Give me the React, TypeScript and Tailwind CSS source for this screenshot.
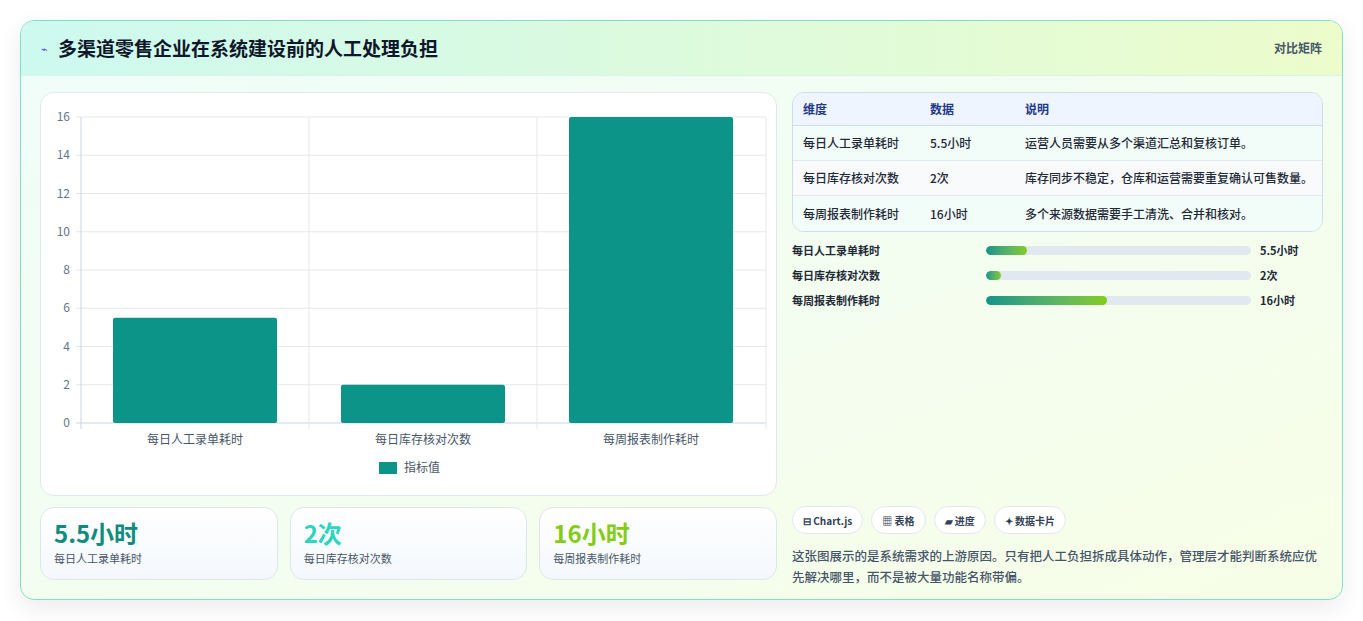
import React from "react";

const F = { fontFamily: '"Noto Sans CJK SC", "Noto Sans", sans-serif' };

function Chart() {
  const ox = 40, oy = 92;
  const y0 = 422 - oy, unit = (422 - 116) / 16;
  const ticks = [0, 2, 4, 6, 8, 10, 12, 14, 16];
  const bars = [
    { x: 112, v: 5.5, l: "每日人工录单耗时" },
    { x: 340, v: 2, l: "每日库存核对次数" },
    { x: 568, v: 16, l: "每周报表制作耗时" },
  ];
  return (
    <svg width="737" height="402" style={F}>
      {ticks.map((t) => (
        <g key={t}>
          <line x1={75 - ox} x2={765 - ox} y1={y0 - t * unit} y2={y0 - t * unit} stroke={t === 0 ? "#cbd5e1" : "#e5e7eb"} />
          <text x={69 - ox} y={y0 - t * unit + 4} textAnchor="end" fontSize="12" fill="#64748b">{t}</text>
        </g>
      ))}
      {[80, 308, 536, 765].map((x) => (
        <line key={x} x1={x - ox} x2={x - ox} y1={116 - oy} y2={y0 + 6} stroke={x === 80 ? "#cbd5e1" : "#e5e7eb"} />
      ))}
      {bars.map((b) => (
        <g key={b.x}>
          <rect x={b.x - ox} y={y0 - b.v * unit} width="164" height={b.v * unit} rx="2" fill="#0d9488" />
          <text x={b.x - ox + 82} y={443 - oy} textAnchor="middle" fontSize="12" fill="#475569">{b.l}</text>
        </g>
      ))}
      <rect x={378 - ox} y={461 - oy} width="18" height="12" fill="#0d9488" />
      <text x={403 - ox} y={471 - oy} fontSize="12" fill="#475569">指标值</text>
    </svg>
  );
}

const rows = [
  ["每日人工录单耗时", "5.5小时", "运营人员需要从多个渠道汇总和复核订单。"],
  ["每日库存核对次数", "2次", "库存同步不稳定，仓库和运营需要重复确认可售数量。"],
  ["每周报表制作耗时", "16小时", "多个来源数据需要手工清洗、合并和核对。"],
];
const prog = [
  ["每日人工录单耗时", 15.5, "5.5小时"],
  ["每日库存核对次数", 5.5, "2次"],
  ["每周报表制作耗时", 45.5, "16小时"],
] as const;

export default function App() {
  return (
    <div className="w-[1363px] h-[621px] bg-white pt-[20px] pl-[20px]" style={F}>
      <div className="w-[1323px] h-[580px] rounded-[14px] border border-[#7ee0c8] overflow-hidden shadow-[0_8px_24px_rgba(0,0,0,0.08)] bg-gradient-to-br from-[#effdfa] to-[#f7fee7] flex flex-col">
        <div className="h-[55px] flex items-center justify-between px-[20px] bg-gradient-to-r from-[#cdf9ef] to-[#ecfccb] border-b border-[#d9f3ea]">
          <div className="flex items-center gap-[10px]">
            <span className="text-[#4f46e5] text-[11px]">⌁</span>
            <span className="text-[19px] font-bold text-[#0f172a]">多渠道零售企业在系统建设前的人工处理负担</span>
          </div>
          <span className="text-[12px] font-semibold text-[#475569]">对比矩阵</span>
        </div>
        <div className="flex gap-[15px] px-[19px] pt-[16px]">
          <div className="w-[737px] flex flex-col gap-[11px]">
            <div className="h-[404px] bg-white rounded-[14px] border border-[#e2e8f0]">
              <Chart />
            </div>
            <div className="grid grid-cols-3 gap-[12px]">
              {[
                ["5.5小时", "text-[#0f8c7e]", "每日人工录单耗时"],
                ["2次", "text-[#2dd4bf]", "每日库存核对次数"],
                ["16小时", "text-[#84cc16]", "每周报表制作耗时"],
              ].map(([v, c, l]) => (
                <div key={l} className="h-[73px] rounded-[14px] border border-[#dbe7f0] bg-gradient-to-b from-white to-[#f4f8fc] px-[13px] pt-[10px]">
                  <div className={`text-[24px] leading-[30px] font-bold ${c}`}>{v}</div>
                  <div className="text-[11px] text-[#475569] mt-[2px]">{l}</div>
                </div>
              ))}
            </div>
          </div>
          <div className="w-[531px] flex flex-col">
            <div className="rounded-[12px] border border-[#cfdbe8] overflow-hidden text-[12px]">
              <div className="flex h-[33px] items-center bg-[#eef5fe] border-b border-[#cfdbe8] text-[#1e3a8a] font-semibold">
                <div className="w-[137px] pl-[10px]">维度</div>
                <div className="w-[95px]">数据</div>
                <div>说明</div>
              </div>
              {rows.map((r, i) => (
                <div key={i} className={`flex h-[35px] items-center text-[#1f2937] font-medium ${i < 2 ? "border-b border-[#e2e8f0]" : ""} ${i === 1 ? "bg-[#f8fafc]" : "bg-[#f2fcf8]"}`}>
                  <div className="w-[137px] pl-[10px]">{r[0]}</div>
                  <div className="w-[95px]">{r[1]}</div>
                  <div>{r[2]}</div>
                </div>
              ))}
            </div>
            <div className="mt-[9px] flex flex-col gap-[7px]">
              {prog.map(([l, p, v]) => (
                <div key={l} className="flex items-center h-[18px] text-[11px] font-semibold text-[#1f2937]">
                  <div className="w-[194px]">{l}</div>
                  <div className="w-[265px] h-[9px] rounded-full bg-[#e2e8f0] overflow-hidden">
                    <div className="h-full rounded-full bg-gradient-to-r from-[#0d9488] to-[#84cc16]" style={{ width: `${p}%` }} />
                  </div>
                  <div className="ml-[9px]">{v}</div>
                </div>
              ))}
            </div>
            <div className="mt-auto" />
            <div className="flex gap-[8px] mt-[197px]">
              {["⊟ Chart.js", "▦ 表格", "▰ 进度", "✦ 数据卡片"].map((c) => (
                <span key={c} className="h-[28px] px-[10px] flex items-center rounded-full bg-white border border-[#e2e8f0] text-[10px] font-semibold text-[#334155]">{c}</span>
              ))}
            </div>
            <p className="mt-[11px] text-[12.5px] leading-[21px] text-[#475569] font-medium">
              这张图展示的是系统需求的上游原因。只有把人工负担拆成具体动作，管理层才能判断系统应优先解决哪里，而不是被大量功能名称带偏。
            </p>
          </div>
        </div>
      </div>
    </div>
  );
}
